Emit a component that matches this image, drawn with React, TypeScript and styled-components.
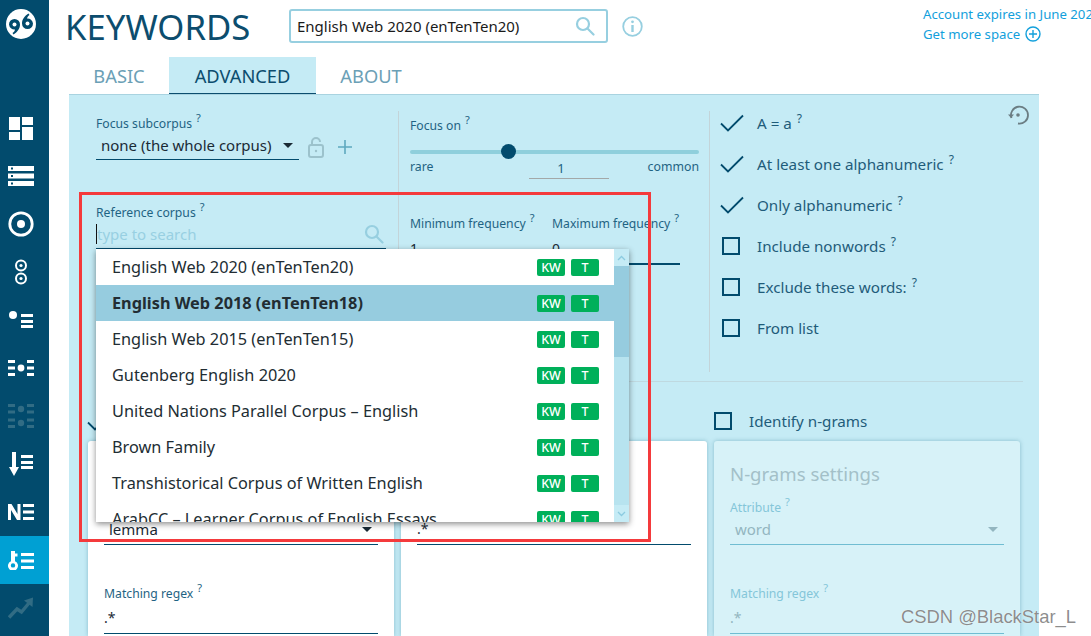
import React from 'react';
import styled, { createGlobalStyle } from 'styled-components';

const GlobalStyle = createGlobalStyle`
  html, body { margin: 0; padding: 0; height: 100%; overflow: hidden; background: #fff; }
  body { font-family: "Noto Sans", "Open Sans", sans-serif; }
  * { box-sizing: border-box; }
`;

const Page = styled.div`
  position: relative;
  display: flex;
  width: 1091px;
  height: 636px;
  overflow: hidden;
`;
const Sidebar = styled.nav`
  width: 49px;
  flex: none;
  background: #024b6d;
  display: flex;
  flex-direction: column;
`;
const LogoBox = styled.div`
  height: 104px;
  padding: 9px 0 0 6px;
`;
const NavItem = styled.div<{ $active?: boolean }>`
  height: 48px;
  display: flex;
  align-items: center;
  justify-content: center;
  padding-right: 7px;
  background: ${p => (p.$active ? '#00a0d3' : 'transparent')};
  color: #fff;
`;
const Main = styled.main`
  flex: 1;
  min-width: 0;
  display: flex;
  flex-direction: column;
`;
const Header = styled.header`
  height: 57px;
  flex: none;
  display: flex;
  align-items: flex-start;
  padding-left: 16px;
`;
const Title = styled.h1`
  margin: 4px 0 0;
  width: 224px;
  flex: none;
  font-size: 34.7px;
  line-height: 46px;
  font-weight: 400;
  color: #0c4d6e;
`;
const CorpusBox = styled.div`
  margin-top: 9px;
  width: 319px;
  height: 34px;
  flex: none;
  border: 2px solid #97cfe0;
  border-radius: 3px;
  padding: 0 11px 0 6px;
  display: flex;
  align-items: center;
  justify-content: space-between;
  font-size: 15px;
  color: #1a1a1a;
`;
const InfoButton = styled.div`
  margin: 16px 0 0 14px;
  width: 21px;
  height: 21px;
  flex: none;
  color: #97cfe0;
`;
const Account = styled.div`
  margin: 4px 0 0 280px;
  flex: none;
  font-size: 13.2px;
  line-height: 20px;
  color: #12a0dc;
  white-space: nowrap;
`;
const PlusLine = styled.div`
  display: flex;
  align-items: center;
  gap: 5px;
`;
const Tabs = styled.div`
  height: 37px;
  flex: none;
  margin-left: 20px;
  width: 970px;
  display: flex;
`;
const Tab = styled.div<{ $active?: boolean; $w: number }>`
  width: ${p => p.$w}px;
  text-align: center;
  font-size: 18.3px;
  line-height: 37px;
  color: ${p => (p.$active ? '#0c4d6e' : '#6ba0b6')};
  background: ${p => (p.$active ? '#c5ebf5' : 'transparent')};
  border-bottom: ${p => (p.$active ? '1px solid #0c4d6e' : 'none')};
`;
const Panel = styled.section`
  margin-left: 20px;
  width: 970px;
  flex: 1;
  min-height: 0;
  overflow: hidden;
  background: #c5ebf5;
  border-top: 1px solid #a9d3e0;
  padding-top: 16px;
  display: flex;
  flex-direction: column;
`;
const TopRow = styled.div`
  display: grid;
  grid-template-columns: 329px 311px 1fr;
  height: 261px;
  flex: none;
`;
const Column = styled.div<{ $divided?: boolean; $pad: number; $top?: number }>`
  padding-left: ${p => p.$pad}px;
  padding-top: ${p => p.$top ?? 0}px;
  border-left: ${p => (p.$divided ? '1px solid #c3d4d9' : 'none')};
`;
const RightColumn = styled(Column)`
  display: flex;
  justify-content: space-between;
  padding-right: 10px;
`;
const Label = styled.div<{ $faded?: boolean }>`
  font-size: 12.2px;
  line-height: 18px;
  height: 18px;
  color: ${p => (p.$faded ? '#84c6d9' : '#1f6383')};
  white-space: nowrap;
`;
const FieldLabel = styled(Label)`
  line-height: 20px;
`;
const Hint = styled.sup<{ $big?: boolean }>`
  font-size: ${p => (p.$big ? '12px' : '11px')};
  line-height: 0;
  margin-left: ${p => (p.$big ? '5px' : '4px')};
  vertical-align: 6px;
`;
const SelectRow = styled.div<{ $w?: number; $h?: number; $faded?: boolean }>`
  width: ${p => (p.$w ? `${p.$w}px` : '100%')};
  height: ${p => p.$h ?? 27}px;
  flex: none;
  display: flex;
  align-items: center;
  justify-content: space-between;
  padding: 0 6px 2px 5px;
  font-size: 15px;
  color: ${p => (p.$faded ? '#93b6c0' : '#1a2a35')};
  border-bottom: 1px solid ${p => (p.$faded ? '#70bdd2' : '#024b6d')};
`;
const Caret = styled.span<{ $faded?: boolean }>`
  width: 0;
  height: 0;
  border-left: 5px solid transparent;
  border-right: 5px solid transparent;
  border-top: 5px solid ${p => (p.$faded ? '#93b6c0' : '#1a2a35')};
`;
const SubcorpusRow = styled.div`
  display: flex;
  align-items: center;
  gap: 8px;
  color: #9cc2cc;
`;
const PlusIcon = styled.span`
  margin: 0 0 0 4px;
  color: #5ea9bf;
  display: flex;
`;
const ReferenceBlock = styled.div`
  margin-top: 43px;
  width: 290px;
`;
const SearchRow = styled.div`
  height: 28px;
  display: flex;
  align-items: center;
  justify-content: space-between;
  font-size: 15px;
  color: #98d0e2;
  border-bottom: 1px solid #024b6d;
  padding: 0 2px 2px 0;
`;
const Placeholder = styled.span`
  border-left: 1px solid #111;
  line-height: 20px;
`;
const Track = styled.div`
  margin-top: 16px;
  width: 289px;
  height: 4px;
  border-radius: 2px;
  background: #8fcfdc;
  position: relative;
`;
const Thumb = styled.span`
  position: absolute;
  left: 91px;
  top: -6px;
  width: 15px;
  height: 15px;
  border-radius: 50%;
  background: #024b6d;
`;
const Scale = styled.div`
  margin-top: 4px;
  width: 289px;
  height: 24px;
  display: grid;
  grid-template-columns: 119px 80px 1fr;
  align-items: start;
  font-size: 12.3px;
  line-height: 18px;
  color: #1f6383;
`;
const ScaleEnd = styled.span`
  text-align: right;
`;
const ScaleValue = styled.span`
  text-align: center;
  padding-right: 16px;
  line-height: 20px;
  height: 21px;
  font-size: 13px;
  border-bottom: 1px solid #a3a8a8;
`;
const FrequencyRow = styled.div`
  margin-top: 33px;
  display: grid;
  grid-template-columns: 130px 128px;
  column-gap: 12px;
`;
const NumberValue = styled.div`
  height: 32px;
  font-size: 14px;
  line-height: 32px;
  color: #1a2a35;
  border-bottom: 2px solid #024b6d;
`;
const CheckList = styled.div`
  display: flex;
  flex-direction: column;
  row-gap: 18px;
`;
const CheckRow = styled.div`
  height: 23px;
  display: flex;
  align-items: center;
  gap: 17px;
  font-size: 15.2px;
  color: #1f5c7a;
  white-space: nowrap;
`;
const CheckBox = styled.span`
  width: 18px;
  height: 18px;
  flex: none;
  display: block;
  border: 2px solid #024b6d;
`;
const CheckMark = styled.span`
  width: 24px;
  height: 18px;
  flex: none;
  margin: 0 -4px 0 -2px;
  color: #024b6d;
  display: flex;
`;
const ResetButton = styled.div`
  margin-top: -7px;
  color: #6b7d83;
`;
const Rule = styled.hr`
  margin: 9px 16px 0 27px;
  flex: none;
  border: 0;
  border-top: 1px solid #bfd9e0;
`;
const ToggleRow = styled.div`
  height: 59px;
  flex: none;
  display: grid;
  grid-template-columns: 625px 1fr;
  align-items: end;
  padding: 0 0 10px 20px;
`;
const ToggleCell = styled.div`
  display: flex;
  align-items: center;
  gap: 17px;
  font-size: 15.2px;
  color: #1f5c7a;
`;
const Cards = styled.div`
  padding-left: 19px;
  display: grid;
  grid-template-columns: 306px 306px 306px;
  column-gap: 7px;
  flex: 1;
  min-height: 0;
`;
const Card = styled.div<{ $faded?: boolean; $top?: number }>`
  background: ${p => (p.$faded ? '#d7f2f8' : '#fff')};
  border-radius: 3px 3px 0 0;
  box-shadow: 0 0 4px rgba(60, 130, 155, 0.45);
  padding: ${p => p.$top ?? 0}px 16px 0;
`;
const CardTitle = styled.h2`
  margin: 0;
  height: 37px;
  font-size: 18.6px;
  line-height: 26px;
  font-weight: 400;
  color: #a3c0c8;
`;
const CardSpacer = styled.div`
  height: 39px;
`;
const RegexValue = styled.div<{ $faded?: boolean }>`
  height: 32px;
  padding-top: 4px;
  font-size: 14px;
  line-height: 24px;
  color: ${p => (p.$faded ? '#93b6c0' : '#1a2a35')};
  border-bottom: 1px solid ${p => (p.$faded ? '#70bdd2' : '#024b6d')};
`;
const Dropdown = styled.div`
  position: absolute;
  left: 96px;
  top: 249px;
  width: 533px;
  height: 273px;
  background: #fff;
  box-shadow: 0 2px 6px rgba(0, 0, 0, 0.45);
  display: flex;
  overflow: hidden;
`;
const OptionList = styled.div`
  flex: 1;
  min-width: 0;
`;
const Option = styled.div<{ $selected?: boolean }>`
  height: 36px;
  display: flex;
  align-items: center;
  justify-content: space-between;
  padding: 0 15px 1px 16px;
  font-size: 16.3px;
  font-weight: ${p => (p.$selected ? 700 : 400)};
  color: #222d33;
  background: ${p => (p.$selected ? '#96ccdf' : 'transparent')};
  white-space: nowrap;
`;
const Badges = styled.div`
  display: flex;
  gap: 6px;
  margin-top: 1px;
`;
const Badge = styled.span`
  width: 28px;
  height: 17px;
  border-radius: 2px;
  background: #00b05a;
  color: #fff;
  font-size: 12.5px;
  font-weight: 500;
  line-height: 17px;
  text-align: center;
`;
const ScrollBar = styled.div`
  width: 15px;
  flex: none;
  background: #b7e3ef;
  display: flex;
  flex-direction: column;
`;
const ScrollButton = styled.div`
  height: 17px;
  flex: none;
  display: flex;
  align-items: center;
  justify-content: center;
  color: #8ccbe0;
  background: #c5ebf5;
`;
const ScrollThumb = styled.div`
  height: 91px;
  flex: none;
  background: #96ccdf;
`;
const ScrollRest = styled.div`
  flex: 1;
`;
const Annotation = styled.div`
  position: absolute;
  left: 79px;
  top: 192px;
  width: 572px;
  height: 350px;
  border: 3px solid #f43a3c;
  pointer-events: none;
`;
const Watermark = styled.div`
  position: absolute;
  right: 15px;
  top: 606px;
  font-family: "Liberation Sans", Arial, sans-serif;
  font-size: 18.4px;
  color: rgba(90, 90, 90, 0.7);
  text-shadow: 0 0 1px #fff;
`;

const SearchIcon = ({ size = 20 }: { size?: number }) => (
  <svg width={size} height={size} viewBox="0 0 20 20" fill="none" stroke="#97cfe0" strokeWidth="2.2">
    <circle cx="8" cy="8" r="6" />
    <path d="M12.5 12.5 L18.5 18.5" strokeLinecap="round" />
  </svg>
);
const Tick = () => (
  <svg width="24" height="18" viewBox="0 0 24 18" fill="none" stroke="currentColor" strokeWidth="1.8">
    <path d="M1 9.5 L8 16.5 L23 1.5" />
  </svg>
);

const quote = 'M3 15.5a5.5 5.5 0 1 1 11 0c0 4-2.5 7.5-6.5 10l-1-1.5c1.5-1 2.3-2.3 2.5-3.6a5.5 5.5 0 0 1-6-4.9z';
const Logo = () => (
  <svg width="30" height="30" viewBox="0 0 30 30">
    <circle cx="15" cy="15" r="15" fill="#fff" />
    <path d={quote} fill="#024b6d" />
    <path d={quote} fill="#024b6d" transform="rotate(180 15 15)" />
    <circle cx="8.5" cy="15.5" r="2" fill="#fff" />
    <circle cx="21.5" cy="14.5" r="2" fill="#fff" />
  </svg>
);

const lines = (x: number, ys: number[], w = 12, h = 3) =>
  ys.map(y => <rect key={`${x}-${y}`} x={x} y={y} width={w} height={h} />);

const navIcons: { active?: boolean; icon: React.ReactNode }[] = [
  {
    icon: (
      <svg width="24" height="23" viewBox="0 0 24 23" fill="currentColor">
        <rect x="0" y="0" width="11" height="13" />
        <rect x="13" y="0" width="11" height="8" />
        <rect x="0" y="15" width="11" height="8" />
        <rect x="13" y="10" width="11" height="13" />
      </svg>
    ),
  },
  {
    icon: (
      <svg width="26" height="20" viewBox="0 0 26 20" fill="currentColor">
        <path fillRule="evenodd" d="M0 0h26v5H0zM3 1.5v2h2v-2z" />
        <path fillRule="evenodd" d="M0 7.5h26v5H0zM3 9v2h2V9z" />
        <path fillRule="evenodd" d="M0 15h26v5H0zM3 16.5v2h2v-2z" />
      </svg>
    ),
  },
  {
    icon: (
      <svg width="26" height="26" viewBox="0 0 26 26">
        <circle cx="13" cy="13" r="11.2" fill="none" stroke="currentColor" strokeWidth="2.8" />
        <circle cx="13" cy="13" r="4" fill="currentColor" />
      </svg>
    ),
  },
  {
    icon: (
      <svg width="14" height="26" viewBox="0 0 14 26">
        <circle cx="7" cy="6.5" r="5" fill="none" stroke="currentColor" strokeWidth="2" />
        <circle cx="7" cy="6.5" r="1.6" fill="currentColor" />
        <circle cx="7" cy="19.5" r="5" fill="none" stroke="currentColor" strokeWidth="2" />
        <circle cx="7" cy="19.5" r="1.6" fill="currentColor" />
      </svg>
    ),
  },
  {
    icon: (
      <svg width="24" height="18" viewBox="0 0 24 18" fill="currentColor">
        <circle cx="4" cy="4" r="4" />
        {lines(12, [3, 9, 14], 12, 3)}
      </svg>
    ),
  },
  {
    icon: (
      <svg width="26" height="18" viewBox="0 0 26 18" fill="currentColor">
        <circle cx="13" cy="9" r="3.4" />
        {lines(0, [1, 7.5, 14], 7, 3)}
        {lines(19, [1, 7.5, 14], 7, 3)}
      </svg>
    ),
  },
  {
    icon: (
      <svg width="26" height="26" viewBox="0 0 26 26" fill="#316c84">
        <circle cx="13" cy="6" r="3.2" />
        <circle cx="13" cy="20" r="3.2" />
        {lines(0, [1, 7.5], 7, 3)}
        {lines(19, [1, 7.5], 7, 3)}
        {lines(0, [15.5, 22], 7, 3)}
        {lines(19, [15.5, 22], 7, 3)}
      </svg>
    ),
  },
  {
    icon: (
      <svg width="24" height="24" viewBox="0 0 24 24" fill="currentColor">
        <path d="M3 0h4v15h3l-5 9-5-9h3z" />
        {lines(12, [3, 9, 14], 12, 3)}
      </svg>
    ),
  },
  {
    icon: (
      <svg width="26" height="16" viewBox="0 0 26 16" fill="currentColor">
        <path d="M0 0h3.5l6 10V0H12.5v16H9L3 6v10H0z" />
        {lines(15, [0, 6.5, 13], 11, 3)}
      </svg>
    ),
  },
  {
    active: true,
    icon: (
      <svg width="26" height="19" viewBox="0 0 26 19" fill="currentColor">
        <path fillRule="evenodd" d="M3 0h4v2.5h2.5v3H7v4.7a5 5 0 1 1-4 0zM5 12.2a2.2 2.2 0 1 0 0 4.4 2.2 2.2 0 0 0 0-4.4z" />
        {lines(13, [2, 8.5, 15], 13, 3)}
      </svg>
    ),
  },
  {
    icon: (
      <svg width="26" height="22" viewBox="0 0 26 22" fill="none" stroke="#316c84" strokeWidth="3.4">
        <path d="M1 20.5 L9 12 L13.5 15 L21 6" />
        <path d="M16 3.5 L25 0.5 L24.5 10 Z" fill="#316c84" stroke="none" />
      </svg>
    ),
  },
];

const corpora = [
  'English Web 2020 (enTenTen20)',
  'English Web 2018 (enTenTen18)',
  'English Web 2015 (enTenTen15)',
  'Gutenberg English 2020',
  'United Nations Parallel Corpus – English',
  'Brown Family',
  'Transhistorical Corpus of Written English',
  'ArabCC – Learner Corpus of English Essays',
];

const checks = [
  { text: 'A = a', on: true, hint: true },
  { text: 'At least one alphanumeric', on: true, hint: true },
  { text: 'Only alphanumeric', on: true, hint: true },
  { text: 'Include nonwords', on: false, hint: true },
  { text: 'Exclude these words:', on: false, hint: true },
  { text: 'From list', on: false, hint: false },
];

export default function App() {
  return (
    <Page>
      <GlobalStyle />
      <Sidebar>
        <LogoBox>
          <Logo />
        </LogoBox>
        {navIcons.map((item, i) => (
          <NavItem key={i} $active={item.active}>
            {item.icon}
          </NavItem>
        ))}
      </Sidebar>
      <Main>
        <Header>
          <Title>KEYWORDS</Title>
          <CorpusBox>
            <span>English Web 2020 (enTenTen20)</span>
            <SearchIcon />
          </CorpusBox>
          <InfoButton>
            <svg width="21" height="21" viewBox="0 0 21 21" fill="none" stroke="currentColor" strokeWidth="1.8">
              <circle cx="10.5" cy="10.5" r="9.3" />
              <path d="M10.5 9 V16" strokeWidth="2.4" />
              <circle cx="10.5" cy="5.8" r="1.4" fill="currentColor" stroke="none" />
            </svg>
          </InfoButton>
          <Account>
            <div>Account expires in June 2023</div>
            <PlusLine>
              Get more space
              <svg width="16" height="16" viewBox="0 0 16 16" fill="none" stroke="currentColor" strokeWidth="1.4">
                <circle cx="8" cy="8" r="7" />
                <path d="M8 4 V12 M4 8 H12" />
              </svg>
            </PlusLine>
          </Account>
        </Header>
        <Tabs>
          <Tab $w={100}>BASIC</Tab>
          <Tab $active $w={147}>ADVANCED</Tab>
          <Tab $w={110}>ABOUT</Tab>
        </Tabs>
        <Panel>
          <TopRow>
            <Column $pad={27} $top={4}>
              <Label>
                Focus subcorpus<Hint>?</Hint>
              </Label>
              <SubcorpusRow>
                <SelectRow $w={203}>
                  none (the whole corpus)
                  <Caret />
                </SelectRow>
                <svg width="18" height="22" viewBox="0 0 18 22" fill="none" stroke="currentColor" strokeWidth="2">
                  <rect x="2" y="9" width="14" height="12" rx="2" />
                  <path d="M5 9 V6 a4 4 0 0 1 8 0" />
                  <circle cx="9" cy="15" r="1.2" fill="currentColor" stroke="none" />
                </svg>
                <PlusIcon>
                  <svg width="16" height="16" viewBox="0 0 16 16" stroke="currentColor" strokeWidth="1.6">
                    <path d="M8 1 V15 M1 8 H15" />
                  </svg>
                </PlusIcon>
              </SubcorpusRow>
              <ReferenceBlock>
                <FieldLabel>
                  Reference corpus<Hint>?</Hint>
                </FieldLabel>
                <SearchRow>
                  <Placeholder>type to search</Placeholder>
                  <SearchIcon />
                </SearchRow>
              </ReferenceBlock>
            </Column>
            <Column $divided $pad={11} $top={5}>
              <FieldLabel>
                Focus on<Hint>?</Hint>
              </FieldLabel>
              <Track>
                <Thumb />
              </Track>
              <Scale>
                <span>rare</span>
                <ScaleValue>1</ScaleValue>
                <ScaleEnd>common</ScaleEnd>
              </Scale>
              <FrequencyRow>
                <div>
                  <Label>
                    Minimum frequency<Hint>?</Hint>
                  </Label>
                  <NumberValue>1</NumberValue>
                </div>
                <div>
                  <Label>
                    Maximum frequency<Hint>?</Hint>
                  </Label>
                  <NumberValue>0</NumberValue>
                </div>
              </FrequencyRow>
            </Column>
            <RightColumn $divided $pad={12}>
              <CheckList>
                {checks.map(c => (
                  <CheckRow key={c.text}>
                    {c.on ? (
                      <CheckMark>
                        <Tick />
                      </CheckMark>
                    ) : (
                      <CheckBox />
                    )}
                    <span>
                      {c.text}
                      {c.hint && <Hint $big>?</Hint>}
                    </span>
                  </CheckRow>
                ))}
              </CheckList>
              <ResetButton>
                <svg width="22" height="22" viewBox="0 0 22 22" fill="none" stroke="currentColor" strokeWidth="1.8">
                  <path d="M4.5 14 A8.5 8.5 0 1 1 11 19.5" />
                  <path d="M1 10.5 H7 L4 14 Z" fill="currentColor" stroke="none" />
                  <circle cx="11" cy="11" r="1.8" fill="currentColor" stroke="none" />
                </svg>
              </ResetButton>
            </RightColumn>
          </TopRow>
          <Rule />
          <ToggleRow>
            <ToggleCell>
              <CheckMark>
                <Tick />
              </CheckMark>
            </ToggleCell>
            <ToggleCell>
              <CheckBox />
              Identify n-grams
            </ToggleCell>
          </ToggleRow>
          <Cards>
            <Card $top={75}>
              <SelectRow $h={29}>
                lemma
                <Caret />
              </SelectRow>
              <CardSpacer />
              <FieldLabel>
                Matching regex<Hint>?</Hint>
              </FieldLabel>
              <RegexValue>.*</RegexValue>
            </Card>
            <Card $top={72}>
              <RegexValue>.*</RegexValue>
            </Card>
            <Card $faded $top={20}>
              <CardTitle>N-grams settings</CardTitle>
              <FieldLabel $faded>
                Attribute<Hint>?</Hint>
              </FieldLabel>
              <SelectRow $h={29} $faded>
                word
                <Caret $faded />
              </SelectRow>
              <CardSpacer />
              <FieldLabel $faded>
                Matching regex<Hint>?</Hint>
              </FieldLabel>
              <RegexValue $faded>.*</RegexValue>
            </Card>
          </Cards>
        </Panel>
      </Main>
      <Dropdown>
        <OptionList>
          {corpora.map((name, i) => (
            <Option key={name} $selected={i === 1}>
              {name}
              <Badges>
                <Badge>KW</Badge>
                <Badge>T</Badge>
              </Badges>
            </Option>
          ))}
        </OptionList>
        <ScrollBar>
          <ScrollButton>
            <svg width="9" height="6" viewBox="0 0 9 6" fill="none" stroke="currentColor" strokeWidth="1.3">
              <path d="M1 5 L4.5 1.5 L8 5" />
            </svg>
          </ScrollButton>
          <ScrollThumb />
          <ScrollRest />
          <ScrollButton>
            <svg width="9" height="6" viewBox="0 0 9 6" fill="none" stroke="currentColor" strokeWidth="1.3">
              <path d="M1 1 L4.5 4.5 L8 1" />
            </svg>
          </ScrollButton>
        </ScrollBar>
      </Dropdown>
      <Annotation />
      <Watermark>CSDN @BlackStar_L</Watermark>
    </Page>
  );
}
